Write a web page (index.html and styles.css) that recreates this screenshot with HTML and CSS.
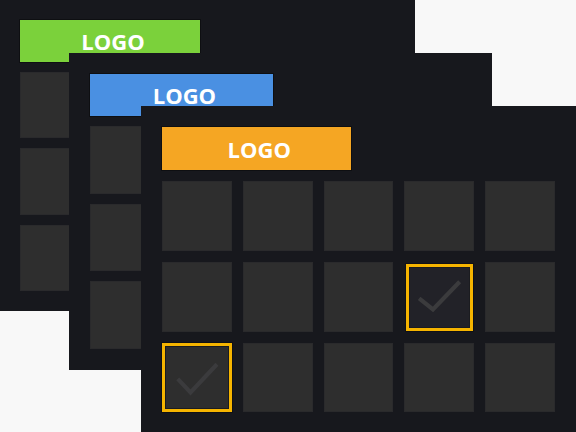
FILE: index.html
```html
<!DOCTYPE html>
<html lang="en">
<head>
    <meta charset="UTF-8">
    <title>Logo windows</title>
    <link rel="stylesheet" href="styles.css">
</head>
<body>
    <div class="stage">
        <!-- back window -->
        <div class="window win-back">
            <div class="logo-bar green">LOGO</div>
            <div class="tiles">
                <div class="tile"></div><div class="tile"></div><div class="tile"></div><div class="tile"></div><div class="tile"></div>
                <div class="tile"></div><div class="tile"></div><div class="tile"></div><div class="tile"></div><div class="tile"></div>
                <div class="tile"></div><div class="tile"></div><div class="tile"></div><div class="tile"></div><div class="tile"></div>
            </div>
        </div>

        <!-- middle window -->
        <div class="window win-mid">
            <div class="logo-bar blue">LOGO</div>
            <div class="tiles">
                <div class="tile"></div><div class="tile"></div><div class="tile"></div><div class="tile"></div><div class="tile"></div>
                <div class="tile"></div><div class="tile"></div><div class="tile"></div><div class="tile"></div><div class="tile"></div>
                <div class="tile"></div><div class="tile"></div><div class="tile"></div><div class="tile"></div><div class="tile"></div>
            </div>
        </div>

        <!-- front window -->
        <div class="window win-front">
            <div class="logo-bar orange">LOGO</div>
            <div class="tiles">
                <div class="tile"></div><div class="tile"></div><div class="tile"></div><div class="tile"></div><div class="tile"></div>
                <div class="tile"></div><div class="tile"></div><div class="tile"></div>
                <div class="tile checked dim">
                    <svg viewBox="0 0 66 66"><path d="M11 34 L26 46 L55 16"/></svg>
                </div>
                <div class="tile"></div>
                <div class="tile checked">
                    <svg viewBox="0 0 70 70"><path d="M14 36 L28 51 L57 20"/></svg>
                </div>
                <div class="tile"></div><div class="tile"></div><div class="tile"></div><div class="tile"></div>
            </div>
        </div>
    </div>
</body>
</html>
```

FILE: styles.css
```css
/* Basic styling */
body { margin: 0; background: #f8f8f8; font-family: "Open Sans", "Noto Sans", sans-serif; }
.stage { position: relative; width: 576px; height: 432px; overflow: hidden; }

/* windows sit on a free canvas, each a bit larger than the one behind */
.window { position: absolute; box-sizing: border-box; background: #17181d; display: flex; flex-direction: column; }
.win-back { left: 0; top: 0; width: 415px; height: 311px; padding: 20px; gap: 10px; }
.win-mid { left: 69px; top: 53px; width: 423px; height: 317px; padding: 21px; gap: 10px; }
.win-front { left: 141px; top: 106px; width: 435px; height: 326px; padding: 21px 21px 22px 21px; gap: 11px; }

.logo-bar { width: 48%; height: 42px; flex: none; display: flex; align-items: center; justify-content: center; padding-left: 6px; box-sizing: border-box; color: #fff; font-weight: 700; font-size: 22px; box-shadow: 0 0 0 1px #0e0f12; }
.win-front .logo-bar { height: 43px; }
.green { background: #7bd13b; }
.blue { background: #4a90e2; }
.orange { background: #f5a623; }

.tiles { flex: 1; display: grid; grid-template-columns: repeat(5, 1fr); grid-template-rows: repeat(3, 1fr); gap: 10px; }
.win-front .tiles { gap: 11px; }
.tile { background: #2e2e2e; border: 1px solid #2a2a2c; }

.tile.checked { position: relative; border: 3px solid #f5b400; box-shadow: 0 0 0 1px #101116, inset 0 0 0 1px #1b1c20; }
.tile.checked.dim { background: #222228; margin: 2px 1px 1px 2px; }
.tile svg { display: block; width: 100%; height: 100%; }
.tile path { fill: none; stroke: #3b3b3d; stroke-width: 4.5; }
```
